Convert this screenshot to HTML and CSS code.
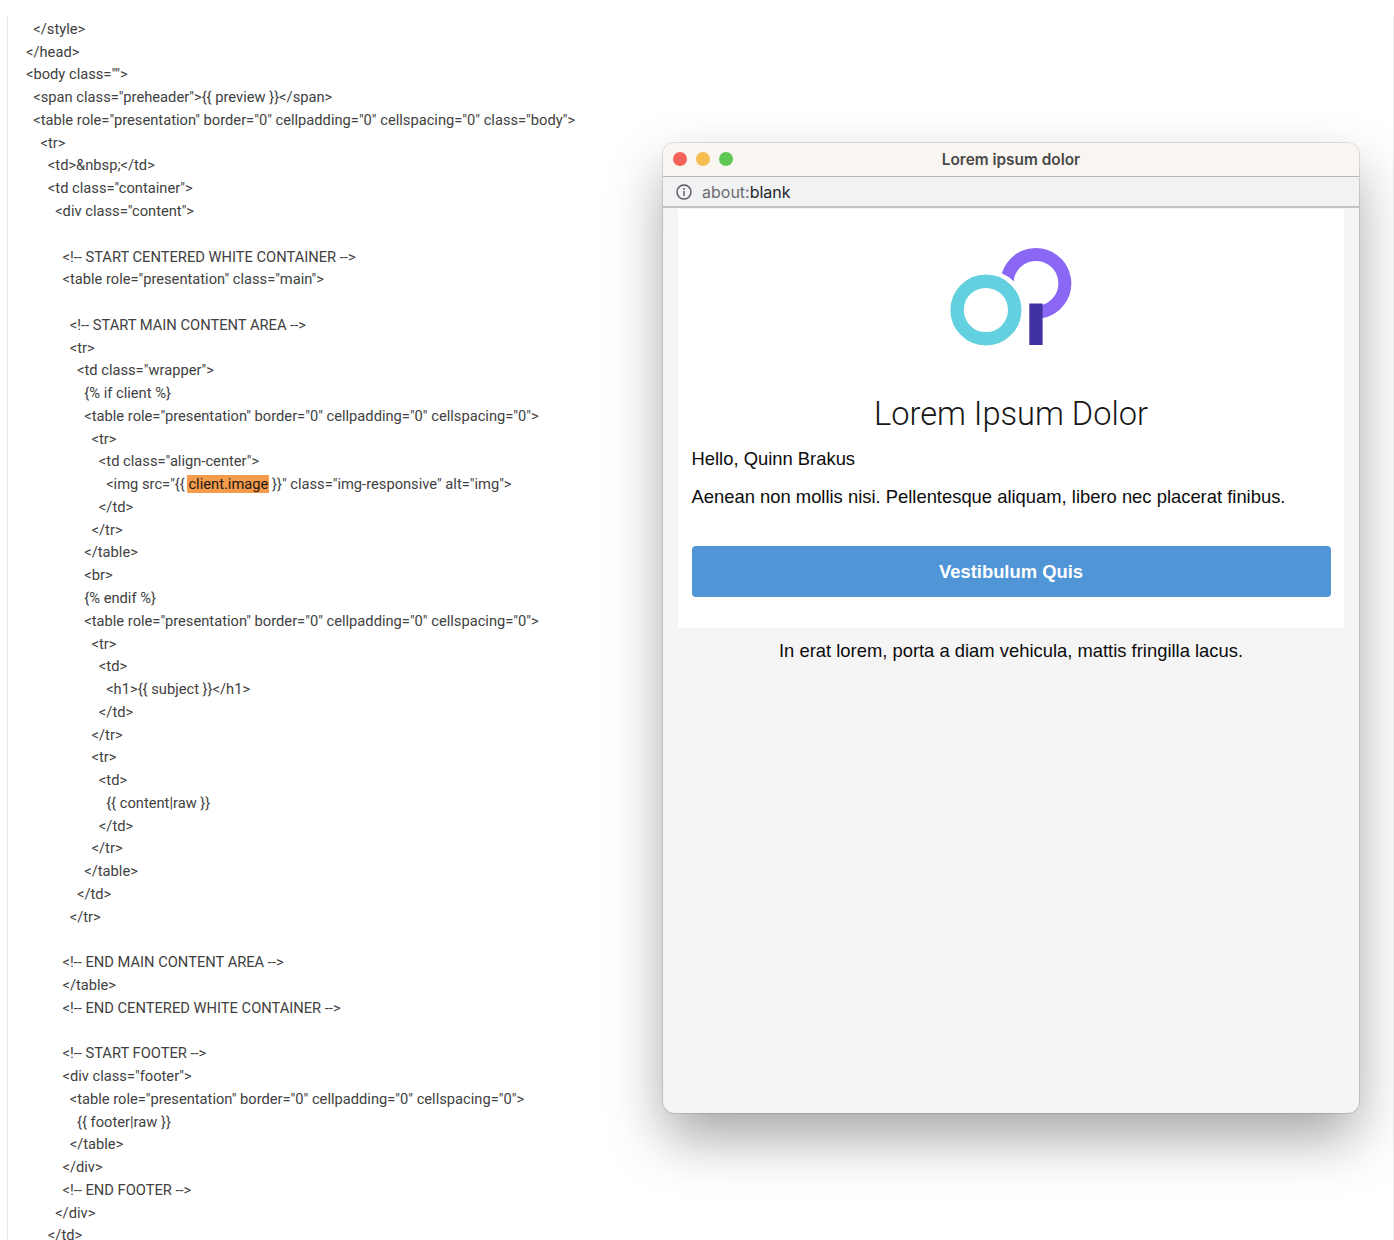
FILE: index.html
```html
<!DOCTYPE html>
<html lang="en">
<head>
<meta charset="utf-8">
<title>Lorem ipsum dolor</title>
<link rel="stylesheet" href="styles.css">
</head>
<body>
<div class="page">
<pre class="code">  &lt;/style&gt;
&lt;/head&gt;
&lt;body class=""&gt;
  &lt;span class="preheader"&gt;{{ preview }}&lt;/span&gt;
  &lt;table role="presentation" border="0" cellpadding="0" cellspacing="0" class="body"&gt;
    &lt;tr&gt;
      &lt;td&gt;&amp;nbsp;&lt;/td&gt;
      &lt;td class="container"&gt;
        &lt;div class="content"&gt;

          &lt;!-- START CENTERED WHITE CONTAINER --&gt;
          &lt;table role="presentation" class="main"&gt;

            &lt;!-- START MAIN CONTENT AREA --&gt;
            &lt;tr&gt;
              &lt;td class="wrapper"&gt;
                {% if client %}
                &lt;table role="presentation" border="0" cellpadding="0" cellspacing="0"&gt;
                  &lt;tr&gt;
                    &lt;td class="align-center"&gt;
                      &lt;img src="{{ <mark class="hit">client.image</mark> }}" class="img-responsive" alt="img"&gt;
                    &lt;/td&gt;
                  &lt;/tr&gt;
                &lt;/table&gt;
                &lt;br&gt;
                {% endif %}
                &lt;table role="presentation" border="0" cellpadding="0" cellspacing="0"&gt;
                  &lt;tr&gt;
                    &lt;td&gt;
                      &lt;h1&gt;{{ subject }}&lt;/h1&gt;
                    &lt;/td&gt;
                  &lt;/tr&gt;
                  &lt;tr&gt;
                    &lt;td&gt;
                      {{ content|raw }}
                    &lt;/td&gt;
                  &lt;/tr&gt;
                &lt;/table&gt;
              &lt;/td&gt;
            &lt;/tr&gt;

          &lt;!-- END MAIN CONTENT AREA --&gt;
          &lt;/table&gt;
          &lt;!-- END CENTERED WHITE CONTAINER --&gt;

          &lt;!-- START FOOTER --&gt;
          &lt;div class="footer"&gt;
            &lt;table role="presentation" border="0" cellpadding="0" cellspacing="0"&gt;
              {{ footer|raw }}
            &lt;/table&gt;
          &lt;/div&gt;
          &lt;!-- END FOOTER --&gt;
        &lt;/div&gt;
      &lt;/td&gt;</pre>
<section class="window">
  <header class="titlebar">
    <div class="lights">
      <span class="light red"></span>
      <span class="light yellow"></span>
      <span class="light green"></span>
    </div>
    <div class="wintitle">Lorem ipsum dolor</div>
  </header>
  <div class="urlbar">
    <svg class="info" width="16" height="16" viewBox="0 0 16 16" fill="none" aria-hidden="true">
      <circle cx="8" cy="8" r="7" stroke="#56575a" stroke-width="1.4"/>
      <rect x="7.3" y="6.9" width="1.4" height="5" fill="#56575a"/>
      <rect x="7.2" y="4" width="1.6" height="1.6" fill="#56575a"/>
    </svg>
    <span class="scheme">about:</span><span class="blank">blank</span>
  </div>
  <div class="viewport">
    <div class="card">
      <svg class="logo" width="160" height="120" viewBox="0 0 160 120" aria-hidden="true">
        <path d="M76.4 53 A28.9 28.9 0 1 1 109 77" fill="none" stroke="#8a68f5" stroke-width="13"/>
        <circle cx="54.9" cy="75" r="40" fill="#fff"/>
        <circle cx="54.9" cy="75" r="28.8" fill="none" stroke="#62d0de" stroke-width="13.4"/>
        <rect x="98.3" y="68.5" width="13.3" height="41.5" fill="#3f32a5"/>
      </svg>
      <h1 class="headline">Lorem Ipsum Dolor</h1>
      <p class="para first">Hello, Quinn Brakus</p>
      <p class="para">Aenean non mollis nisi. Pellentesque aliquam, libero nec placerat finibus.</p>
      <a class="button">Vestibulum Quis</a>
    </div>
    <p class="foot">In erat lorem, porta a diam vehicula, mattis fringilla lacus.</p>
  </div>
</section>
</div>
</body>
</html>
```
FILE: styles.css
```css
html, body {
  margin: 0;
  height: 1240px;
  overflow: hidden;
  background: #fff;
}
.page {
  display: flex;
  align-items: flex-start;
  box-sizing: border-box;
  margin: 16px 0 0 7px;
  height: 1224px;
  width: 1387px;
  border-left: 1px solid #e9e9e9;
  border-right: 1px solid #e9e9e9;
  overflow: hidden;
}
.code {
  flex: 1 1 0;
  min-width: 0;
  margin: 0;
  padding: 1.85px 0 0 18px;
  font: 14.7px/22.77px Roboto, "Liberation Sans", sans-serif;
  color: #414141;
  white-space: pre;
  height: 1240px;
}
.hit {
  background: #f59b4c;
  color: #1f1a14;
  border-radius: 1px;
  padding: 0 1px;
  margin: 0 -1px;
}
.window {
  flex: 0 0 696px;
  box-sizing: border-box;
  height: 970px;
  margin: 127px 34px 0 0;
  border-radius: 11px;
  background: #f5f5f5;
  box-shadow: 0 26px 56px -2px rgba(0, 0, 0, 0.36), 0 0 0 0.5px rgba(0, 0, 0, 0.22);
  display: flex;
  flex-direction: column;
}
.titlebar {
  position: relative;
  height: 34px;
  flex: none;
  display: flex;
  align-items: center;
  justify-content: center;
  background: #f9f5f1;
  border-bottom: 1px solid #b9b8b6;
  box-sizing: border-box;
  border-radius: 11px 11px 0 0;
}
.lights {
  position: absolute;
  left: 10px;
  top: 9px;
  display: flex;
  gap: 9px;
}
.light {
  width: 14px;
  height: 14px;
  border-radius: 50%;
}
.red { background: #f2625a; }
.yellow { background: #f6bd4f; }
.green { background: #5fc855; }
.wintitle {
  font: 600 15.4px Inter, "Liberation Sans", sans-serif;
  color: #4a4a4a;
}
.urlbar {
  flex: none;
  height: 31px;
  display: flex;
  align-items: center;
  box-sizing: border-box;
  padding-left: 13px;
  background: #f1f2f4;
  border-bottom: 2px solid #c3c3c3;
  font: 16px Inter, "Liberation Sans", sans-serif;
}
.info { margin-right: 10px; flex: none; }
.scheme { color: #6b6c6f; }
.blank { color: #26272a; }
.viewport {
  flex: 1;
  padding: 1px 15px 0;
}
.card {
  box-sizing: border-box;
  height: 419px;
  background: #fff;
  padding: 26px 13.5px 0;
  display: flex;
  flex-direction: column;
}
.logo {
  align-self: center;
  flex: none;
}
.headline {
  margin: 39px 0 0;
  text-align: center;
  font: 300 32.6px/40px Roboto, "Liberation Sans", sans-serif;
  color: #161616;
}
.para {
  margin: 14px 0 0;
  font: 18.4px/24px "Liberation Sans", Arial, sans-serif;
  color: #0c0c0c;
}
.para.first { margin-top: 13px; }
.button {
  margin-top: 37px;
  height: 51px;
  display: flex;
  align-items: center;
  justify-content: center;
  background: #5095d6;
  border-radius: 4px;
  color: #fff;
  font: 700 18.4px "Liberation Sans", Arial, sans-serif;
}
.foot {
  margin: 11px 0 0;
  text-align: center;
  font: 18.4px/24px "Liberation Sans", Arial, sans-serif;
  color: #0c0c0c;
}
```
